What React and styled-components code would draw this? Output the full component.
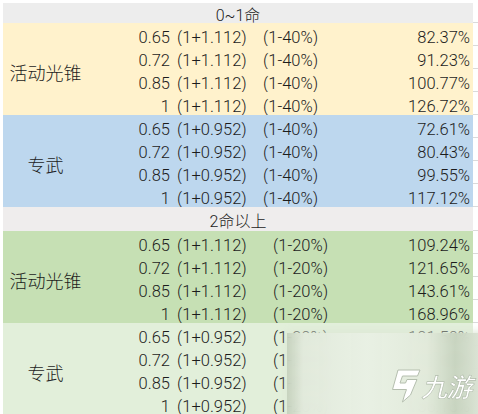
import React from 'react';
import styled, { createGlobalStyle } from 'styled-components';

const GlobalStyle = createGlobalStyle`
  html, body {
    margin: 0;
    padding: 0;
    background: #ffffff;
    overflow: hidden;
  }
  body {
    font-family: Roboto, 'Noto Sans CJK SC', sans-serif;
    color: #1c1c1c;
  }
`;

const Sheet = styled.div`
  position: relative;
  width: 478px;
  height: 414px;
  padding-top: 3px;
  box-sizing: border-box;
  overflow: hidden;
`;

const HeaderRow = styled.div`
  display: flex;
  height: ${(p) => p.$h}px;
`;

const HeaderCell = styled.div`
  margin-left: 3px;
  width: 470px;
  background: ${(p) => p.$bg};
  display: flex;
  align-items: center;
  justify-content: center;
  font-size: 16px;
  font-weight: 300;
  padding-top: ${(p) => p.$pt || 0}px;
  box-sizing: border-box;
`;

const Gutter = styled.div`
  width: 5px;
  background: #ffffff;
  border-bottom: 1px solid #dadada;
  box-sizing: border-box;
`;

const Block = styled.div`
  display: flex;
`;

const Label = styled.div`
  margin-left: 3px;
  width: 85px;
  background: ${(p) => p.$bg};
  display: flex;
  align-items: center;
  justify-content: center;
  padding-top: 5px;
  box-sizing: border-box;
  font-family: 'Noto Sans CJK SC', sans-serif;
  font-weight: 300;
  font-size: 18px;
`;

const Rows = styled.div`
  display: flex;
  flex-direction: column;
`;

const Row = styled.div`
  display: grid;
  grid-template-columns: 84px 83px 145px 73px 5px;
  height: 23px;
`;

const Cell = styled.div`
  background: ${(p) => p.$bg};
  display: flex;
  align-items: flex-end;
  justify-content: ${(p) => (p.$right ? 'flex-end' : 'flex-start')};
  padding-left: ${(p) => p.$pl || 0}px;
  padding-right: ${(p) => p.$pr || 0}px;
  font-size: 16.5px;
  font-weight: 300;
  line-height: 1;
  white-space: nowrap;
  box-sizing: border-box;
`;

const Watermark = styled.div`
  position: absolute;
  left: 287px;
  top: 333px;
  width: 200px;
  height: 90px;
  background: linear-gradient(
    90deg,
    rgba(196, 208, 188, 0.92) 0%,
    rgba(226, 234, 220, 0.96) 8%,
    rgba(233, 240, 228, 0.97) 40%,
    rgba(226, 234, 219, 0.96) 70%,
    rgba(200, 212, 192, 0.95) 84%,
    rgba(222, 230, 216, 0.95) 100%
  );
  backdrop-filter: blur(6px);
  box-shadow: 0 -2px 6px rgba(220, 230, 214, 0.8);
`;

const Logo = styled.div`
  position: absolute;
  left: 102px;
  top: 36px;
  display: flex;
  align-items: center;
  gap: 3px;
`;

const LogoText = styled.span`
  font-family: 'Noto Sans CJK SC', sans-serif;
  font-weight: 500;
  font-size: 26px;
  line-height: 1;
  color: #ffffff;
  display: inline-block;
  transform: skewX(-14deg);
  letter-spacing: -1px;
  -webkit-text-stroke: 0.6px #aeb9a8;
`;

const blocks = [
  {
    header: '0~1命',
    headerH: 20,
    indent: 8,
    pct: '(1-40%)',
    groups: [
      { label: '活动光锥', bg: '#fff2cc', add: '1.112', vals: ['82.37%', '91.23%', '100.77%', '126.72%'] },
      { label: '专武', bg: '#bdd7ee', add: '0.952', vals: ['72.61%', '80.43%', '99.55%', '117.12%'] },
    ],
  },
  {
    header: '2命以上',
    headerH: 24,
    indent: 18,
    pct: '(1-20%)',
    groups: [
      { label: '活动光锥', bg: '#c6e0b4', add: '1.112', vals: ['109.24%', '121.65%', '143.61%', '168.96%'] },
      { label: '专武', bg: '#e2efda', add: '0.952', vals: ['101.50%', '112.44%', '132.74%', '156.16%'] },
    ],
  },
];

const mults = ['0.65', '0.72', '0.85', '1'];

const LogoMark = () => (
  <svg width="32" height="34" viewBox="0 0 32 34">
    <path
      d="M9 1 H31 L28.5 7 H13.5 L11 14 H16.5 L18 10.5 H28 L21.5 26 L13.5 33 L15.5 26 L17.5 20.5 H3.5 Z"
      fill="#ffffff"
      stroke="#b4beae"
      strokeWidth="1"
      strokeLinejoin="round"
    />
  </svg>
);

export default function App() {
  return (
    <>
      <GlobalStyle />
      <Sheet>
        {blocks.map((b) => (
          <React.Fragment key={b.header}>
            <HeaderRow $h={b.headerH}>
              <HeaderCell $bg={b.headerH === 20 ? '#ededed' : '#efeded'} $pt={b.headerH === 20 ? 1 : 2}>
                {b.header}
              </HeaderCell>
              <Gutter />
            </HeaderRow>
            {b.groups.map((g) => (
              <Block key={b.header + g.label}>
                <Label $bg={g.bg}>{g.label}</Label>
                <Rows>
                  {mults.map((m, i) => (
                    <Row key={m}>
                      <Cell $bg={g.bg} $right $pr={2}>{m}</Cell>
                      <Cell $bg={g.bg} $pl={5}>(1+{g.add})</Cell>
                      <Cell $bg={g.bg} $pl={b.indent}>{b.pct}</Cell>
                      <Cell $bg={g.bg} $right $pr={3}>{g.vals[i]}</Cell>
                      <Gutter />
                    </Row>
                  ))}
                </Rows>
              </Block>
            ))}
          </React.Fragment>
        ))}
        <Watermark>
          <Logo>
            <LogoMark />
            <LogoText>九游</LogoText>
          </Logo>
        </Watermark>
      </Sheet>
    </>
  );
}
